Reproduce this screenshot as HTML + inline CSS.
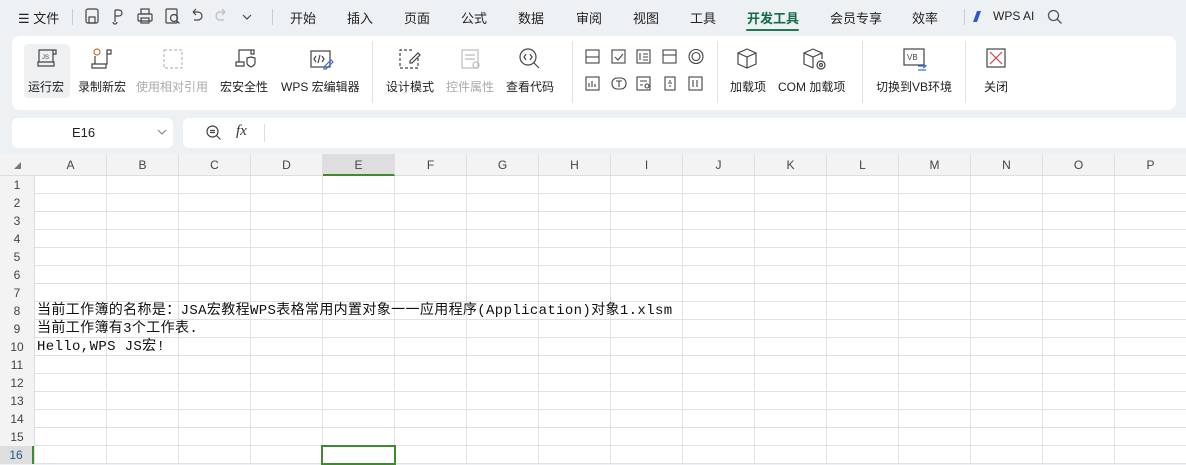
<!DOCTYPE html>
<html><head><meta charset="utf-8"><style>
*{margin:0;padding:0;box-sizing:border-box}
body{width:1186px;height:464px;overflow:hidden;background:#eef1f4;font-family:"Liberation Sans","Noto Sans CJK SC",sans-serif;position:relative;color:#222}
.a{position:absolute}
.t{font-size:13px;white-space:nowrap}
.tab{position:absolute;top:8px;font-size:13px}
.ribbon{position:absolute;left:12px;top:36px;width:1164px;height:74px;background:#fff;border-radius:8px}
.lbl{position:absolute;top:42px;font-size:12px;white-space:nowrap;color:#222}
.dis{color:#aaa}
.sep{position:absolute;top:5px;width:1px;height:62px;background:#e2e2e2}
svg{position:absolute;overflow:visible}
.grid{position:absolute;left:35px;top:176px;width:1151px;height:288px;background:#fff;
background-image:repeating-linear-gradient(90deg,transparent 0 71px,#e1e1e1 71px 72px),repeating-linear-gradient(180deg,transparent 0 17px,#e1e1e1 17px 18px)}
.ch{position:absolute;top:154px;height:22px;width:72px;text-align:center;font-size:12px;line-height:22px;color:#444;border-right:1px solid #e0e0e0}
.rh{position:absolute;left:0;width:34px;height:18px;text-align:center;font-size:12px;line-height:18px;color:#444}
.cell{position:absolute;left:37px;font-family:"Liberation Mono","Noto Sans CJK SC",monospace;font-size:14px;line-height:18px;white-space:nowrap;color:#111;letter-spacing:0.36px}
</style></head><body>
<div class="tab" style="left:18px">☰ 文件</div>
<div class="a" style="left:72px;top:9px;width:1px;height:16px;background:#ccc"></div>
<svg style="left:85px;top:8px" width="170" height="18" fill="none" stroke="#444" stroke-width="1.2">
<rect x="1" y="1" width="12" height="14" rx="2"/><rect x="4" y="9" width="6" height="6"/>
<path d="M30 2v12M30 2h4a3 3 0 0 1 0 6h-4M28 14a2 2 0 1 0 4 0"/>
<rect x="53" y="6" width="14" height="7" rx="1"/><rect x="56" y="1" width="8" height="5"/><rect x="56" y="10" width="8" height="5"/>
<rect x="81" y="1" width="11" height="14" rx="1"/><circle cx="89" cy="10" r="3.5"/><path d="M91.5 12.5l3 3"/>
<path d="M108 4h5a4 4 0 0 1 0 8h-4M108 4l3-3M108 4l3 3"/>
<path stroke="#bbb" d="M140 4h-5a4 4 0 0 0 0 8h4M140 4l-3-3M140 4l-3 3"/>
<path d="M158 7l4 4 4-4"/></svg>
<div class="a" style="left:272px;top:9px;width:1px;height:16px;background:#ccc"></div>
<div class="tab" style="left:290px">开始</div>
<div class="tab" style="left:347px">插入</div>
<div class="tab" style="left:404px">页面</div>
<div class="tab" style="left:461px">公式</div>
<div class="tab" style="left:518px">数据</div>
<div class="tab" style="left:576px">审阅</div>
<div class="tab" style="left:633px">视图</div>
<div class="tab" style="left:690px">工具</div>
<div class="tab" style="left:747px;color:#146c4a;font-weight:bold">开发工具</div>
<div class="a" style="left:746px;top:29px;width:53px;height:2px;background:#1e7a55;border-radius:1px"></div>
<div class="tab" style="left:830px">会员专享</div>
<div class="tab" style="left:912px">效率</div>
<div class="a" style="left:964px;top:9px;width:1px;height:16px;background:#ccc"></div>
<div class="a" style="left:975px;top:11px;width:4px;height:11px;background:#2b5ad8;transform:skewX(-20deg)"></div>
<div class="tab" style="left:993px;font-size:12px;top:9px">WPS AI</div>
<svg style="left:1047px;top:9px" width="16" height="16" fill="none" stroke="#555" stroke-width="1.3"><circle cx="6.5" cy="6.5" r="5"/><path d="M10 10l4.5 4.5"/></svg>

<div class="ribbon">
<div class="a" style="left:12px;top:8px;width:46px;height:54px;background:#eef0f2;border-radius:4px"></div>
<svg style="left:24px;top:12px" width="24" height="22" fill="none" stroke="#444" stroke-width="1.2">
<path d="M3 2h14v12H3zM17 2h3v4h-3M2 14h16v4H2z"/><text x="6" y="11" font-size="6" fill="#444" stroke="none" font-family="Liberation Sans">JS</text></svg>
<svg style="left:78px;top:12px" width="24" height="22" fill="none" stroke="#444" stroke-width="1.2">
<path d="M5 8v8h12V2h4v4h-4M2 16h14v4H2z"/><circle cx="7" cy="4" r="3" stroke="#c07030"/></svg>
<svg style="left:150px;top:12px" width="24" height="22" fill="none" stroke="#bbb" stroke-width="1.2" stroke-dasharray="3 2"><rect x="2" y="2" width="18" height="18"/></svg>
<svg style="left:222px;top:12px" width="24" height="22" fill="none" stroke="#444" stroke-width="1.2">
<path d="M5 14V2h12v4h3v-4h-3M2 14h8v4H2zM13 10l4-1 4 1v5c0 2-2 3-4 4-2-1-4-2-4-4z"/></svg>
<svg style="left:298px;top:12px" width="24" height="22" fill="none" stroke="#444" stroke-width="1.2">
<rect x="1" y="3" width="19" height="16"/><path d="M6 8l-2 3 2 3M10 7l-2 8M12 8l2 3-2 3"/><path d="M14 19l7-7 2 2-7 7h-2z" stroke="#3b6fd0"/></svg>
<div class="lbl" style="left:16px">运行宏</div>
<div class="lbl" style="left:66px">录制新宏</div>
<div class="lbl dis" style="left:124px">使用相对引用</div>
<div class="lbl" style="left:208px">宏安全性</div>
<div class="lbl" style="left:269px">WPS 宏编辑器</div>
<div class="sep" style="left:360px"></div>
<svg style="left:386px;top:12px" width="24" height="22" fill="none" stroke="#444" stroke-width="1.2"><path d="M14 2H2v18h18V10" stroke-dasharray="3 2"/><path d="M12 13l8-8 2 2-8 8h-2z"/></svg>
<svg style="left:448px;top:12px" width="24" height="22" fill="none" stroke="#bbb" stroke-width="1.2"><rect x="2" y="2" width="16" height="18"/><path d="M5 7h10M5 11h10"/><circle cx="16" cy="17" r="3"/></svg>
<svg style="left:506px;top:12px" width="24" height="22" fill="none" stroke="#444" stroke-width="1.2"><circle cx="10" cy="9" r="8"/><path d="M16 15l5 5M8 6l-2 3 2 3M12 6l2 3-2 3"/></svg>
<div class="lbl" style="left:374px">设计模式</div>
<div class="lbl dis" style="left:434px">控件属性</div>
<div class="lbl" style="left:494px">查看代码</div>
<div class="sep" style="left:560px"></div>
<svg style="left:573px;top:13px" width="130" height="50" fill="none" stroke="#444" stroke-width="1.1">
<rect x="1" y="1" width="13" height="13"/><path d="M1 8h13"/>
<rect x="27" y="1" width="13" height="13"/><path d="M30 8l3 3 5-6"/>
<rect x="52" y="1" width="13" height="13"/><path d="M55 4v7M58 5h5M58 8h5M58 11h5"/>
<rect x="78" y="1" width="13" height="13"/><path d="M78 6h13"/>
<circle cx="111" cy="7.5" r="7"/><circle cx="111" cy="7.5" r="4"/>
<rect x="1" y="28" width="13" height="13"/><path d="M4 38v-4M7 38v-6M10 38v-3"/>
<rect x="27" y="29" width="14" height="11" rx="5"/><path d="M31 32h6M34 32v6"/>
<rect x="52" y="28" width="13" height="13"/><path d="M55 32h7M55 36h3"/><circle cx="62" cy="37" r="2"/>
<rect x="80" y="28" width="10" height="13"/><path d="M83 34h4M85 31v2M85 36v2"/>
<rect x="104" y="28" width="13" height="13"/><path d="M108 31v7M112 31v7"/>
</svg>
<div class="sep" style="left:705px"></div>
<svg style="left:724px;top:12px" width="24" height="22" fill="none" stroke="#444" stroke-width="1.2"><path d="M11 1l9 4v11l-9 4-9-4V5zM2 5l9 4 9-4M11 9v11"/></svg>
<svg style="left:790px;top:12px" width="26" height="22" fill="none" stroke="#444" stroke-width="1.2"><path d="M11 1l9 4v6M11 20l-9-4V5l9-4M2 5l9 4 9-4M11 9v11"/><circle cx="19" cy="17" r="4"/><circle cx="19" cy="17" r="1.5"/></svg>
<div class="lbl" style="left:718px">加载项</div>
<div class="lbl" style="left:766px">COM 加载项</div>
<div class="sep" style="left:850px"></div>
<svg style="left:891px;top:12px" width="26" height="24" fill="none" stroke="#444" stroke-width="1.2"><rect x="1" y="1" width="20" height="16"/><text x="4" y="12" font-size="8" fill="#444" stroke="none" font-family="Liberation Sans">VB</text><path d="M15 18h8M20 16l3 2-3 2M23 22h-8" stroke="#3b6fd0"/></svg>
<div class="lbl" style="left:864px">切换到VB环境</div>
<div class="sep" style="left:953px"></div>
<svg style="left:974px;top:12px" width="24" height="22" fill="none" stroke="#444" stroke-width="1.2"><rect x="1" y="1" width="18" height="18"/><path d="M4 4l12 12M16 4L4 16" stroke="#c44"/></svg>
<div class="lbl" style="left:972px">关闭</div>
</div>

<div class="a" style="left:12px;top:118px;width:161px;height:30px;background:#fff;border-radius:6px"></div>
<div class="a t" style="left:72px;top:125px">E16</div>
<svg style="left:157px;top:129px" width="10" height="6" fill="none" stroke="#888" stroke-width="1.2"><path d="M1 1l4 4 4-4"/></svg>
<div class="a" style="left:183px;top:118px;width:1003px;height:30px;background:#fff;border-radius:6px 0 0 6px"></div>
<svg style="left:206px;top:125px" width="16" height="16" fill="none" stroke="#444" stroke-width="1.2"><circle cx="6.5" cy="6.5" r="5.5"/><path d="M4 5.5h5M4 7.5h5M10.5 10.5l4 4"/></svg>
<div class="a" style="left:236px;top:123px;font-family:'Liberation Serif',serif;font-style:italic;font-size:15px;color:#333">fx</div>
<div class="a" style="left:264px;top:124px;width:1px;height:18px;background:#ddd"></div>

<div class="a" style="left:0;top:154px;width:1186px;height:22px;background:#f3f3f3;border-bottom:1px solid #ddd"></div>
<div class="a" style="left:0;top:176px;width:35px;height:288px;background:#f3f3f3;border-right:1px solid #ddd"></div>
<div class="a" style="left:14px;top:162px;width:0;height:0;border-left:7px solid transparent;border-bottom:7px solid #777"></div>
<div class="ch" style="left:35px">A</div><div class="ch" style="left:107px">B</div><div class="ch" style="left:179px">C</div><div class="ch" style="left:251px">D</div>
<div class="ch" style="left:323px;background:#dedede;border-bottom:2px solid #3f8a2e">E</div>
<div class="ch" style="left:395px">F</div><div class="ch" style="left:467px">G</div><div class="ch" style="left:539px">H</div><div class="ch" style="left:611px">I</div><div class="ch" style="left:683px">J</div><div class="ch" style="left:755px">K</div><div class="ch" style="left:827px">L</div><div class="ch" style="left:899px">M</div><div class="ch" style="left:971px">N</div><div class="ch" style="left:1043px">O</div><div class="ch" style="left:1115px">P</div>
<div class="grid"></div>
<div class="rh" style="top:176px">1</div><div class="rh" style="top:194px">2</div><div class="rh" style="top:212px">3</div><div class="rh" style="top:230px">4</div><div class="rh" style="top:248px">5</div><div class="rh" style="top:266px">6</div><div class="rh" style="top:284px">7</div><div class="rh" style="top:302px">8</div><div class="rh" style="top:320px">9</div><div class="rh" style="top:338px">10</div><div class="rh" style="top:356px">11</div><div class="rh" style="top:374px">12</div><div class="rh" style="top:392px">13</div><div class="rh" style="top:410px">14</div><div class="rh" style="top:428px">15</div>
<div class="rh" style="top:446px;background:#dedede;border-right:2px solid #3f8a2e;color:#1e5a8a">16</div>
<div class="cell" style="top:302px">当前工作簿的名称是：JSA宏教程WPS表格常用内置对象一一应用程序(Application)对象1.xlsm</div>
<div class="cell" style="top:320px">当前工作簿有3个工作表.</div>
<div class="cell" style="top:338px">Hello,WPS JS宏!</div>
<div class="a" style="left:321px;top:445px;width:75px;height:20px;border:2px solid #3f8a2e"></div>
</body></html>
